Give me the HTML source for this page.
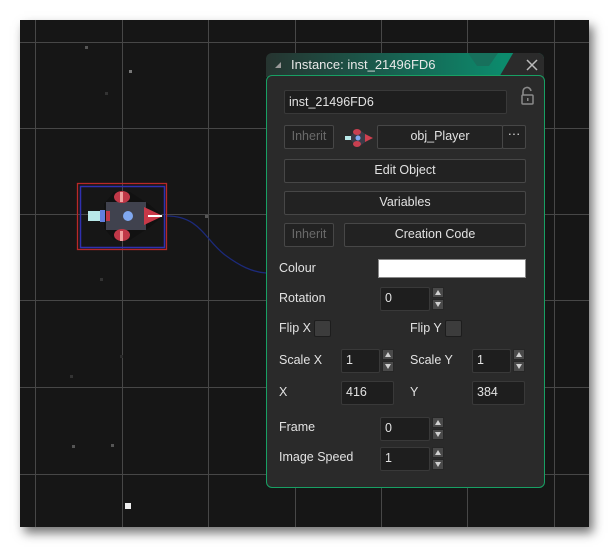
<!DOCTYPE html>
<html><head><meta charset="utf-8"><style>
*{margin:0;padding:0;box-sizing:border-box}
body{width:609px;height:547px;background:#fff;position:relative;overflow:hidden;font-family:"Liberation Sans","DejaVu Sans",sans-serif;font-size:12px;color:#e2e2e2}
.a{position:absolute}
#cv{left:20px;top:20px;width:569px;height:507px;background:#161616;box-shadow:4px 6px 10px rgba(0,0,0,.55);overflow:hidden}
.gv{position:absolute;top:0;width:1px;height:100%;background:#474747}
.gh{position:absolute;left:0;height:1px;width:100%;background:#474747}
.st{position:absolute;width:3px;height:3px;background:#555}
.fld{position:absolute;background:#1e1e1e;border:1px solid #393939;border-radius:2px;padding-left:4px;line-height:21px;font-size:12.5px}
.btn{position:absolute;background:#222;border:1px solid #474747;border-radius:2px;text-align:center;line-height:21px;font-size:12.5px}
.dis{color:#6a6a6a}
.lbl{position:absolute;font-size:12.5px}
.sp{position:absolute;width:12px;height:11px;background:#4a4a4a;border:1px solid #262626;border-radius:1px}
.sp:after{content:"";position:absolute;left:2px;top:2px;border-left:3.5px solid transparent;border-right:3.5px solid transparent}
.up:after{border-bottom:5px solid #d0d0d0}
.dn:after{border-top:5px solid #d0d0d0}
.cb{position:absolute;width:17px;height:17px;background:#3c3c3c;border:1px solid #1d1d1d;border-radius:2px}
</style></head><body>
<div id="cv" class="a">
<div class="gv" style="left:15px"></div><div class="gv" style="left:102px"></div><div class="gv" style="left:188px"></div><div class="gv" style="left:275px"></div><div class="gv" style="left:361px"></div><div class="gv" style="left:447px"></div><div class="gv" style="left:534px"></div>
<div class="gh" style="top:22px"></div><div class="gh" style="top:108px"></div><div class="gh" style="top:194px"></div><div class="gh" style="top:280px"></div><div class="gh" style="top:367px"></div><div class="gh" style="top:454px"></div>
<div class="st" style="left:65px;top:26px"></div><div class="st" style="left:109px;top:50px;background:#777"></div><div class="st" style="left:85px;top:72px;background:#333"></div><div class="st" style="left:185px;top:195px;background:#555"></div><div class="st" style="left:52px;top:425px"></div><div class="st" style="left:91px;top:424px"></div><div class="st" style="left:236px;top:510px"></div><div class="st" style="left:105px;top:483px;width:6px;height:6px;background:#eee"></div><div class="st" style="left:80px;top:258px;background:#333"></div><div class="st" style="left:50px;top:355px;background:#333"></div><div class="st" style="left:100px;top:335px;background:#2a2a2a"></div>
</div>
<svg class="a" style="left:0;top:0" width="609" height="547">
<path d="M167 216 C200 216 205 240 225 255 C240 266 252 272 266 273" stroke="#1c2a7a" stroke-width="1.3" fill="none"/>
<rect x="77.5" y="183.5" width="89" height="66" fill="none" stroke="#b82828" stroke-width="1.3"/>
<rect x="80.5" y="186.5" width="84" height="61" fill="none" stroke="#3030b0" stroke-width="1.5"/>
<g>
<polygon points="104,204 114,192 130,192 150,205 163,216 150,227 130,240 114,240 104,228" fill="#111"/>
<rect x="106" y="202" width="40" height="28" fill="#40424e"/>
<ellipse cx="122" cy="197" rx="8" ry="6" fill="#c03848"/><rect x="120" y="192" width="3" height="10" fill="#f0a0a0"/>
<ellipse cx="122" cy="235" rx="8" ry="6" fill="#c03848"/><rect x="120" y="231" width="3" height="10" fill="#f0a0a0"/>
<polygon points="144,207 163,216 144,225" fill="#c83848"/><rect x="148" y="215" width="14" height="2" fill="#fff"/>
<rect x="88" y="211" width="14" height="10" fill="#b8e8e8"/><rect x="100" y="210" width="5" height="12" fill="#6080e0"/>
<rect x="106" y="211" width="4" height="10" fill="#c03848"/>
<circle cx="128" cy="216" r="5" fill="#80a8f0"/>
</g>
</svg>
<div class="a" style="left:266px;top:53px;width:278px;height:24px;border-radius:6px 6px 0 0;background:linear-gradient(90deg,#263430 0%,#1a5a4c 40%,#0c8a6c 85%);overflow:hidden">
<div class="a" style="left:222px;top:0;width:56px;height:24px;background:#2b2b2b;clip-path:polygon(20% 100%,45% 0,100% 0,100% 100%)"></div>
<div class="a" style="left:202px;top:0;width:30px;height:13px;background:#17705c;clip-path:polygon(0 0,100% 0,70% 100%,30% 100%)"></div>
<div class="a" style="left:9px;top:9px;width:0;height:0;border-left:6px solid transparent;border-bottom:6px solid #999"></div>
<div class="a" style="left:25px;top:4px;font-size:13px;color:#e8e8e8">Instance: inst_21496FD6</div>
<svg class="a" style="left:260px;top:6px" width="12" height="12"><path d="M1 1L11 11M11 1L1 11" stroke="#bbb" stroke-width="1.5"/></svg>
</div>
<div class="a" style="left:266px;top:75px;width:279px;height:413px;background:#2a2a2a;border:1px solid #18a064;border-radius:6px"></div>
<div class="fld" style="left:284px;top:90px;width:223px;height:24px;line-height:22px">inst_21496FD6</div>
<svg class="a" style="left:519px;top:86px" width="16" height="20"><path d="M4 9 V6 A4 4 0 0 1 12 5" stroke="#8a8a8a" stroke-width="1.6" fill="none"/><rect x="3" y="9" width="11" height="9" rx="1" fill="none" stroke="#8a8a8a" stroke-width="1.5"/><rect x="8" y="12" width="1.5" height="3" fill="#8a8a8a"/></svg>
<div class="btn dis" style="left:284px;top:125px;width:50px;height:24px">Inherit</div>
<svg class="a" style="left:343px;top:128px" width="32" height="20"><polygon points="6,10 12,3 18,3 28,10 18,17 12,17" fill="#3a3c48"/><ellipse cx="14" cy="4" rx="4" ry="3" fill="#c84050"/><ellipse cx="14" cy="16" rx="4" ry="3" fill="#c84050"/><polygon points="22,6 30,10 22,14" fill="#d04050"/><rect x="2" y="8" width="6" height="4" fill="#b8e8e8"/><circle cx="15" cy="10" r="2.5" fill="#80a8f0"/></svg>
<div class="btn" style="left:377px;top:125px;width:126px;height:24px">obj_Player</div>
<div class="btn" style="left:502px;top:125px;width:24px;height:24px;line-height:17px">···</div>
<div class="btn" style="left:284px;top:159px;width:242px;height:24px">Edit Object</div>
<div class="btn" style="left:284px;top:191px;width:242px;height:24px">Variables</div>
<div class="btn dis" style="left:284px;top:223px;width:50px;height:24px">Inherit</div>
<div class="btn" style="left:344px;top:223px;width:182px;height:24px">Creation Code</div>
<div class="lbl" style="left:279px;top:261px">Colour</div>
<div class="a" style="left:378px;top:259px;width:148px;height:19px;background:#fff;border:1px solid #888"></div>
<div class="lbl" style="left:279px;top:291px">Rotation</div>
<div class="fld" style="left:380px;top:287px;width:50px;height:24px">0</div>
<div class="sp up" style="left:432px;top:287px"></div><div class="sp dn" style="left:432px;top:299px"></div>
<div class="lbl" style="left:279px;top:321px">Flip X</div><div class="cb" style="left:314px;top:320px"></div>
<div class="lbl" style="left:410px;top:321px">Flip Y</div><div class="cb" style="left:445px;top:320px"></div>
<div class="lbl" style="left:279px;top:353px">Scale X</div>
<div class="fld" style="left:341px;top:349px;width:39px;height:24px">1</div>
<div class="sp up" style="left:382px;top:349px"></div><div class="sp dn" style="left:382px;top:361px"></div>
<div class="lbl" style="left:410px;top:353px">Scale Y</div>
<div class="fld" style="left:472px;top:349px;width:39px;height:24px">1</div>
<div class="sp up" style="left:513px;top:349px"></div><div class="sp dn" style="left:513px;top:361px"></div>
<div class="lbl" style="left:279px;top:385px">X</div>
<div class="fld" style="left:341px;top:381px;width:53px;height:24px">416</div>
<div class="lbl" style="left:410px;top:385px">Y</div>
<div class="fld" style="left:472px;top:381px;width:53px;height:24px">384</div>
<div class="lbl" style="left:279px;top:420px">Frame</div>
<div class="fld" style="left:380px;top:417px;width:50px;height:24px">0</div>
<div class="sp up" style="left:432px;top:417px"></div><div class="sp dn" style="left:432px;top:429px"></div>
<div class="lbl" style="left:279px;top:450px">Image Speed</div>
<div class="fld" style="left:380px;top:447px;width:50px;height:24px">1</div>
<div class="sp up" style="left:432px;top:447px"></div><div class="sp dn" style="left:432px;top:459px"></div>
</body></html>
